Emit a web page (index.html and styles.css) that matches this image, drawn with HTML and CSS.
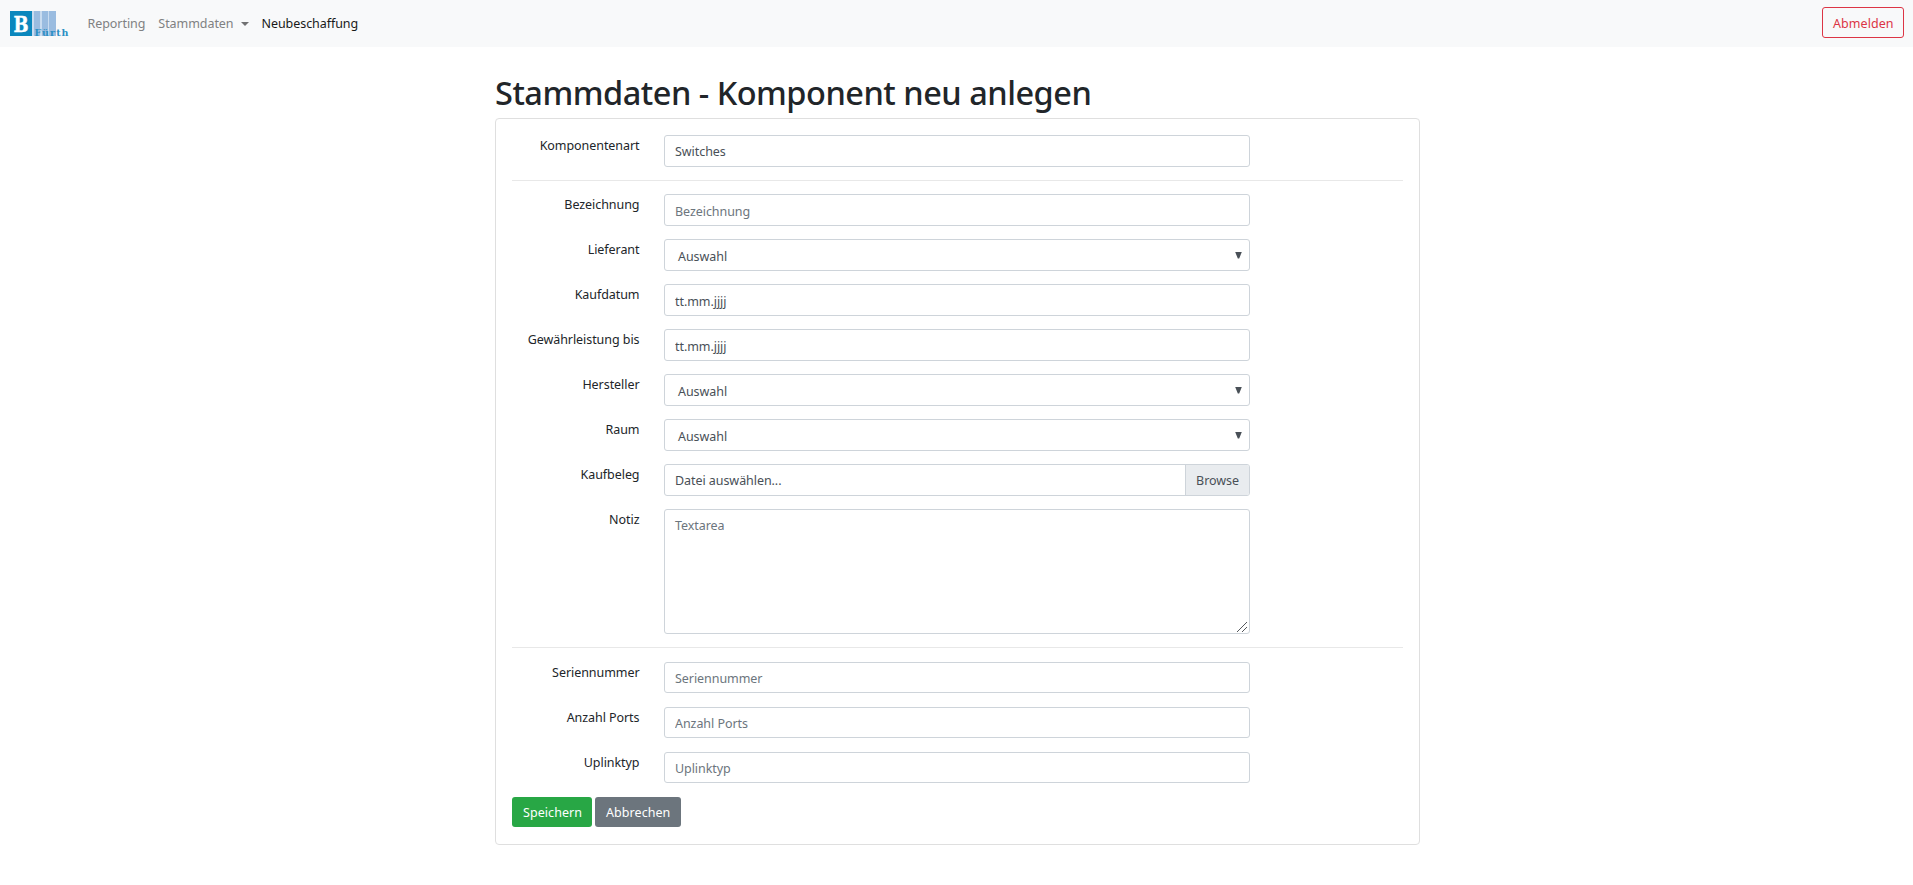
FILE: index.html
```
<!DOCTYPE html>
<html lang="de">
<head>
<meta charset="utf-8">
<title>Stammdaten</title>
<link rel="stylesheet" href="styles.css">
</head>
<body>
<nav class="navbar">
  <a class="brand">
    <svg class="logo" width="60" height="25" viewBox="0 0 60 25">
      <rect width="22" height="25" fill="#0a87bd"/>
      <rect x="22" width="24" height="25" fill="#c9dcf0"/>
      <rect x="24" width="6" height="25" fill="#9abce0"/>
      <rect x="32" width="6" height="25" fill="#9abce0"/>
      <rect x="39" width="7" height="25" fill="#9abce0"/>
      <text class="logo-b" x="3.5" y="21" textLength="15" lengthAdjust="spacingAndGlyphs">B</text>
      <text class="logo-name" x="24.5" y="24.6" textLength="34">Fürth</text>
    </svg>
  </a>
  <a class="nav-link">Reporting</a>
  <a class="nav-link dropdown">Stammdaten</a>
  <a class="nav-link active">Neubeschaffung</a>
  <button class="btn btn-outline">Abmelden</button>
</nav>
<main class="container">
  <h1 class="title">Stammdaten - Komponent neu anlegen</h1>
  <form class="card">
    <div class="row"><label class="label">Komponentenart</label><input class="control filled" value="Switches"></div>
    <hr class="rule">
    <div class="row"><label class="label">Bezeichnung</label><input class="control" placeholder="Bezeichnung"></div>
    <div class="row"><label class="label">Lieferant</label><div class="control select"><span>Auswahl</span><i class="arrow"></i></div></div>
    <div class="row"><label class="label">Kaufdatum</label><input class="control" value="tt.mm.jjjj"></div>
    <div class="row"><label class="label">Gewährleistung bis</label><input class="control" value="tt.mm.jjjj"></div>
    <div class="row"><label class="label">Hersteller</label><div class="control select"><span>Auswahl</span><i class="arrow"></i></div></div>
    <div class="row"><label class="label">Raum</label><div class="control select"><span>Auswahl</span><i class="arrow"></i></div></div>
    <div class="row"><label class="label">Kaufbeleg</label><div class="control file"><span class="file-name">Datei auswählen...</span><span class="browse">Browse</span></div></div>
    <div class="row"><label class="label">Notiz</label>
      <div class="area-wrap">
        <textarea class="control area" placeholder="Textarea"></textarea>
        <svg class="grip" width="12" height="12" viewBox="0 0 12 12"><path d="M1 11L11 1M6 11L11 6" stroke="#55585c" fill="none"/></svg>
      </div>
    </div>
    <hr class="rule">
    <div class="row short"><label class="label">Seriennummer</label><input class="control" placeholder="Seriennummer"></div>
    <div class="row short"><label class="label">Anzahl Ports</label><input class="control" placeholder="Anzahl Ports"></div>
    <div class="row short"><label class="label">Uplinktyp</label><input class="control" placeholder="Uplinktyp"></div>
    <div class="actions">
      <button class="btn btn-save" type="button">Speichern</button>
      <button class="btn btn-cancel" type="button">Abbrechen</button>
    </div>
  </form>
</main>
</body>
</html>
```
FILE: styles.css
```
* { box-sizing: border-box; }
body {
  margin: 0;
  background: #fff;
  color: #212529;
  font: 12.5px/20px "Noto Sans", "Open Sans", sans-serif;
  letter-spacing: -0.06px;
}
.navbar {
  display: flex;
  align-items: center;
  height: 47px;
  padding: 0 9px 0 10px;
  background: #f8f9fa;
}
.brand { display: flex; margin-right: 17.5px; }
.logo { overflow: visible; }
.logo-b { font: bold 23px "DejaVu Serif", serif; fill: #fff; stroke: #fff; stroke-width: 0.5px; }
.logo-name { font: bold 9.5px "DejaVu Serif", serif; letter-spacing: 0; fill: #2b8fc4; }
.nav-link { margin-right: 13px; color: #808182; }
.nav-link.active { color: #191919; }
.dropdown { display: flex; align-items: center; }
.dropdown::after {
  content: "";
  margin-left: 7px;
  border: 4px solid transparent;
  border-top-color: #707172;
  border-bottom: 0;
}
.btn {
  height: 30px;
  padding: 2px 10px 0;
  border: 1px solid transparent;
  border-radius: 3px;
  font: inherit;
  letter-spacing: 0.06px;
  color: #fff;
}
.btn-outline {
  height: 31px;
  margin: -2px 0 0 auto;
  width: 82px;
  background: transparent;
  border-color: #dc3545;
  color: #dc3545;
}
.container { width: 925px; margin: 0 0 0 495px; }
.title {
  margin: 0;
  padding-top: 26px;
  height: 71px;
  font-size: 32.5px;
  font-weight: 500;
  line-height: 39px;
  letter-spacing: -0.49px;
  white-space: nowrap;
}
.card {
  height: 727px;
  padding: 16px;
  border: 1px solid #dfdfdf;
  border-radius: 4px;
}
.row { display: flex; align-items: flex-start; margin-bottom: 13px; }
.label { width: 127.5px; margin-right: 24.5px; padding-top: 1px; text-align: right; }
.control {
  width: 586px;
  height: 32px;
  padding: 2px 10px 0;
  border: 1px solid #ced4da;
  border-radius: 3px;
  background: #fff;
  color: #495057;
  font: inherit;
  letter-spacing: inherit;
  outline: 0;
}
.control::placeholder { color: #6c757d; opacity: 1; }
.filled { padding-top: 0; }
.select {
  display: flex;
  align-items: center;
  justify-content: space-between;
  padding: 3px 7px 0 13px;
}
.arrow {
  width: 7px;
  height: 7px;
  margin-top: -3px;
  background: #495057;
  clip-path: polygon(0 0, 100% 0, 60% 100%, 40% 100%);
}
.file { display: flex; padding: 0; overflow: hidden; line-height: 32px; }
.file-name { flex: 1; padding-left: 10px; }
.browse {
  width: 64px;
  border-left: 1px solid #ced4da;
  background: #e9ecef;
  text-align: center;
}
.area-wrap { position: relative; display: flex; }
.area { height: 125px; padding-top: 6px; resize: none; }
.grip { position: absolute; right: 2px; bottom: 1px; }
.rule { margin: 0 0 13px; border: 0; border-top: 1px solid #e8e8e8; }
.short { margin: 14px 0 0; }
.short .control { height: 31px; padding-top: 1px; }
.actions { display: flex; gap: 3px; margin-top: 14px; }
.btn-save { width: 80px; background: #28a745; }
.btn-cancel { width: 86px; background: #6c757d; }
```
